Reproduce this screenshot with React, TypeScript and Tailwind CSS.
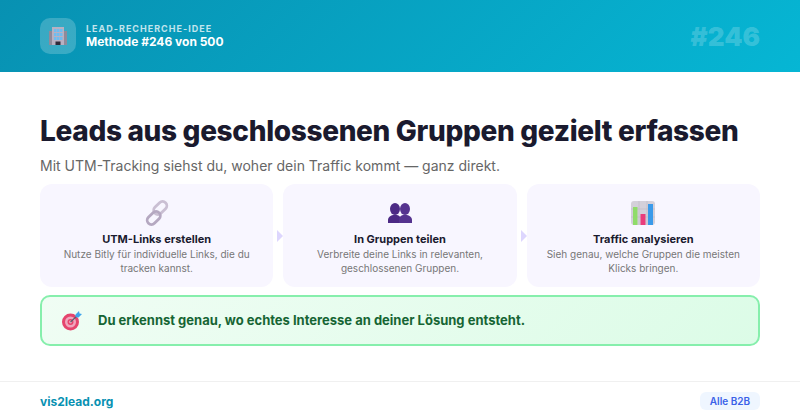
const steps = [
  {
    title: "UTM-Links erstellen",
    lines: ["Nutze Bitly für individuelle Links, die du", "tracken kannst."],
    icon: <LinkIcon />,
  },
  {
    title: "In Gruppen teilen",
    lines: ["Verbreite deine Links in relevanten,", "geschlossenen Gruppen."],
    icon: <PeopleIcon />,
  },
  {
    title: "Traffic analysieren",
    lines: ["Sieh genau, welche Gruppen die meisten", "Klicks bringen."],
    icon: <ChartIcon />,
  },
];

function BuildingIcon() {
  return (
    <svg width="20" height="20" viewBox="0 0 20 20">
      <rect x="1" y="5" width="3.5" height="14" fill="#8f8a9a" />
      <rect x="15.500" y="5" width="3.5" height="14" fill="#8f8a9a" />
      <rect x="4" y="1" width="12" height="18" fill="#b8b1c2" />
      <rect x="6" y="3" width="2.5" height="3" fill="#6fbdf0" />
      <rect x="9" y="3" width="2.5" height="3" fill="#6fbdf0" />
      <rect x="12" y="3" width="2.5" height="3" fill="#6fbdf0" />
      <rect x="6" y="7" width="2.5" height="3" fill="#6fbdf0" />
      <rect x="9" y="7" width="2.5" height="3" fill="#6fbdf0" />
      <rect x="12" y="7" width="2.5" height="3" fill="#6fbdf0" />
      <rect x="6" y="11" width="2.5" height="3" fill="#6fbdf0" />
      <rect x="9" y="11" width="2.5" height="3" fill="#6fbdf0" />
      <rect x="12" y="11" width="2.5" height="3" fill="#6fbdf0" />
      <rect x="7.500" y="15.500" width="5" height="3.500" fill="#2f2b3a" />
    </svg>
  );
}

function LinkIcon() {
  return (
    <svg width="26" height="26" viewBox="0 0 26 26" fill="none">
      <rect x="12" y="0.500" width="8.500" height="15" rx="4.200" transform="rotate(45 16.250 8)" stroke="#cabfd3" strokeWidth="2.800" />
      <rect x="5.500" y="10.500" width="8.500" height="15" rx="4.200" transform="rotate(45 9.750 18)" stroke="#b5a8c1" strokeWidth="2.800" />
    </svg>
  );
}

function PeopleIcon() {
  return (
    <svg width="24" height="20" viewBox="0 0 24 20" fill="#4c2a85">
      <ellipse cx="7" cy="6" rx="5" ry="6" />
      <path d="M0 20v-3c0-3 3-4.500 5-5h4c2 .5 4 2 4 5v3z" />
      <ellipse cx="17" cy="6" rx="5" ry="6" fill="#55338f" />
      <path d="M11 20v-3c0-3 2-4.500 4-5h4c2 .5 5 2 5 5v3z" fill="#55338f" />
    </svg>
  );
}

function ChartIcon() {
  return (
    <svg width="24" height="24" viewBox="0 0 24 24">
      <rect width="24" height="24" rx="3" fill="#d4d0da" />
      <path d="M8 0v24M16 0v24M0 8h24M0 16h24" stroke="#bdb8c5" strokeWidth="0.6" />
      <rect x="2" y="6" width="4.500" height="18" fill="#8fdc6a" />
      <rect x="9.500" y="13" width="5" height="11" fill="#ea3d7c" />
      <rect x="17" y="3" width="5" height="21" fill="#3a9aea" />
    </svg>
  );
}

function TargetIcon() {
  return (
    <svg width="22" height="22" viewBox="0 0 22 22">
      <circle cx="9.500" cy="12" r="8.500" fill="#e5446d" />
      <circle cx="9.500" cy="12" r="5.500" fill="#f0a6bd" />
      <circle cx="9.500" cy="12" r="3" fill="#e5446d" />
      <circle cx="9.500" cy="12" r="1.400" fill="#f0a6bd" />
      <path d="M9.500 12 17 5" stroke="#56606e" strokeWidth="1.100" />
      <path d="M14.500 4.500 18 1l.5 2.500L21 4l-3.500 3.500-3-.5z" fill="#3fa4ec" />
    </svg>
  );
}

export default function App() {
  return (
    <div className="w-[800px] h-[420px] flex flex-col bg-white overflow-hidden font-['Inter',sans-serif]">
      <header className="h-[72px] shrink-0 px-10 flex items-center justify-between bg-[linear-gradient(135deg,#0891b2,#06b6d4)]">
        <div className="flex items-center gap-[10px]">
          <div className="w-9 h-9 rounded-[10px] bg-white/20 flex items-center justify-center">
            <BuildingIcon />
          </div>
          <div>
            <p className="text-[9px] leading-[11px] font-bold tracking-[1px] text-white/75">LEAD-RECHERCHE-IDEE</p>
            <p className="text-[12px] leading-[15px] font-bold text-white">Methode #246 von 500</p>
          </div>
        </div>
        <span className="text-[26px] font-black text-white/20">#246</span>
      </header>

      <main className="flex-1 px-10 pt-[42px]">
        <h1 className="text-[28px] leading-[34px] font-extrabold tracking-[-0.33px] text-[#1a1a2e]">
          Leads aus geschlossenen Gruppen gezielt erfassen
        </h1>
        <p className="mt-[9px] text-[14px] leading-[17px] text-[#666666]">
          Mit UTM-Tracking siehst du, woher dein Traffic kommt — ganz direkt.
        </p>

        <div className="mt-[10px] flex h-[103px]">
          {steps.map((step, i) => (
            <div key={step.title} className="contents">
              {i > 0 && (
                <div className="w-[10px] shrink-0 flex items-center justify-end">
                  <div className="w-0 h-0 border-y-[6px] border-y-transparent border-l-[6px] border-l-[#ddd6fe]" />
                </div>
              )}
              <div className="flex-1 rounded-[12px] bg-[#f8f6ff] flex flex-col items-center text-center pt-[16px]">
                <div className="h-[26px] flex items-center justify-center">{step.icon}</div>
                <p className="mt-[6px] text-[11px] leading-[14px] font-bold text-[#1a1a2e]">{step.title}</p>
                <p className="mt-[2px] text-[10px] leading-[13.5px] text-[#777777]">
                  {step.lines[0]}
                  <br />
                  {step.lines[1]}
                </p>
              </div>
            </div>
          ))}
        </div>

        <div className="mt-2 h-[51px] rounded-[10px] border-2 border-[#86efac] bg-[linear-gradient(135deg,#f0fdf4,#dcfce7)] flex items-center gap-[15px] pl-[19px]">
          <TargetIcon />
          <p className="text-[13px] font-bold text-[#166534]">
            Du erkennst genau, wo echtes Interesse an deiner Lösung entsteht.
          </p>
        </div>
      </main>

      <footer className="h-[39px] shrink-0 border-t border-[#f0f0f0] px-10 flex items-center justify-between">
        <span className="pt-[2px] text-[12px] font-bold text-[#0891b2]">vis2lead.org</span>
        <span className="w-[60px] h-[18px] rounded-[6px] bg-[#eff6ff] flex items-center justify-center text-[10px] font-semibold text-[#3b62e8]">
          Alle B2B
        </span>
      </footer>
    </div>
  );
}
